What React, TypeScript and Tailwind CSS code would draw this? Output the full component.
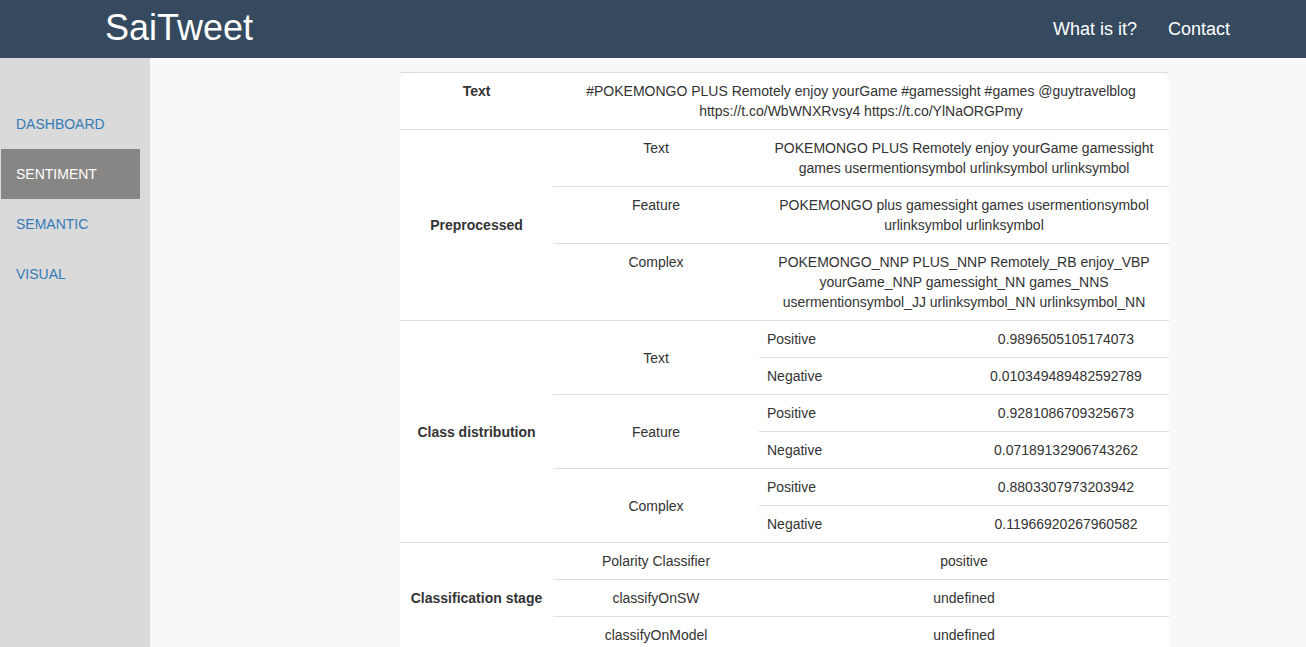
import React from 'react';

const navItems = ['DASHBOARD', 'SENTIMENT', 'SEMANTIC', 'VISUAL'];

const preprocessed = [
  ['Text', 'POKEMONGO PLUS Remotely enjoy yourGame gamessight games usermentionsymbol urlinksymbol urlinksymbol'],
  ['Feature', 'POKEMONGO plus gamessight games usermentionsymbol urlinksymbol urlinksymbol'],
  [
    'Complex',
    'POKEMONGO_NNP PLUS_NNP Remotely_RB enjoy_VBP yourGame_NNP gamessight_NN games_NNS usermentionsymbol_JJ urlinksymbol_NN urlinksymbol_NN',
  ],
];

const distribution: [string, [string, string][]][] = [
  ['Text', [['Positive', '0.9896505105174073'], ['Negative', '0.010349489482592789']]],
  ['Feature', [['Positive', '0.9281086709325673'], ['Negative', '0.07189132906743262']]],
  ['Complex', [['Positive', '0.8803307973203942'], ['Negative', '0.11966920267960582']]],
];

const stages = [
  ['Polarity Classifier', 'positive'],
  ['classifyOnSW', 'undefined'],
  ['classifyOnModel', 'undefined'],
];

function Section({ label, top, children }: { label: string; top?: boolean; children: React.ReactNode }) {
  return (
    <div className="flex border-t border-[#ddd]">
      <div className={`w-[153px] shrink-0 flex justify-center px-2 font-bold ${top ? 'items-start py-2' : 'items-center'}`}>
        {label}
      </div>
      <div className="flex-1 flex flex-col">{children}</div>
    </div>
  );
}

export default function App() {
  return (
    <div className="h-[647px] overflow-hidden flex flex-col text-[14px] leading-5 text-[#333] font-['Liberation_Sans',Arial,sans-serif]">
      {/* Top bar */}
      <div className="h-[58px] shrink-0 bg-[#354a5f] flex items-center justify-between pl-[105px] pr-[76px] text-white">
        <div className="text-[36px] leading-none pb-[2px]">SaiTweet</div>
        <div className="flex gap-[31px] text-[18px]">
          <span>What is it?</span>
          <span>Contact</span>
        </div>
      </div>

      <div className="flex flex-1 min-h-0">
        {/* Side menu */}
        <div className="w-[150px] shrink-0 bg-[#dadada] pt-[41px]">
          {navItems.map((item) => (
            <div
              key={item}
              className={`h-[50px] ml-[1px] w-[139px] flex items-center pl-[15px] ${
                item === 'SENTIMENT' ? 'bg-[#888684] text-white' : 'text-[#337ab7]'
              }`}
            >
              {item}
            </div>
          ))}
        </div>

        {/* Main */}
        <div className="flex-1 bg-[#f8f8f8] pl-[250px] pt-[14px]">
          <div className="w-[769px] border-t border-[#ddd]">
            <div className="bg-white rounded-t-[10px] -mb-px">
              {/* Text */}
              <div className="flex">
                <div className="w-[153px] shrink-0 flex justify-center py-2 px-2 font-bold">Text</div>
                <div className="flex-1 text-center py-2 px-2">
                  #POKEMONGO PLUS Remotely enjoy yourGame #gamessight #games @guytravelblog https://t.co/WbWNXRvsy4
                  https://t.co/YlNaORGPmy
                </div>
              </div>

              <Section label="Preprocessed">
                {preprocessed.map(([k, v], i) => (
                  <div key={k} className={`flex ${i > 0 ? 'border-t border-[#ddd]' : ''}`}>
                    <div className="w-[206px] shrink-0 text-center py-2 px-2">{k}</div>
                    <div className="flex-1 text-center py-2 px-2">{v}</div>
                  </div>
                ))}
              </Section>

              <Section label="Class distribution">
                {distribution.map(([k, rows], i) => (
                  <div key={k} className={`flex ${i > 0 ? 'border-t border-[#ddd]' : ''}`}>
                    <div className="w-[206px] shrink-0 flex items-center justify-center px-2">{k}</div>
                    <div className="flex-1 flex flex-col">
                      {rows.map(([c, p], j) => (
                        <div key={c} className={`flex ${j > 0 ? 'border-t border-[#ddd]' : ''}`}>
                          <div className="w-[204px] shrink-0 py-2 px-2">{c}</div>
                          <div className="flex-1 text-center py-2 px-2">{p}</div>
                        </div>
                      ))}
                    </div>
                  </div>
                ))}
              </Section>

              <Section label="Classification stage">
                {stages.map(([k, v], i) => (
                  <div key={k} className={`flex ${i > 0 ? 'border-t border-[#ddd]' : ''}`}>
                    <div className="w-[206px] shrink-0 text-center py-2 px-2">{k}</div>
                    <div className="flex-1 text-center py-2 px-2">{v}</div>
                  </div>
                ))}
              </Section>
            </div>
          </div>
        </div>
      </div>
    </div>
  );
}
